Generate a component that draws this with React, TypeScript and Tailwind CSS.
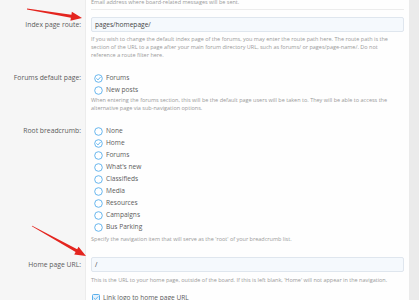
import React from "react";

function Radio({ checked }: { checked?: boolean }) {
  return (
    <svg width="9" height="9" viewBox="0 0 9 9" className="shrink-0">
      <circle cx="4.5" cy="4.5" r="3.8" fill="#fff" stroke="#58afec" strokeWidth="0.9" />
      {checked && (
        <path d="M2.7 4.6 L4 5.9 L6.4 3.2" fill="none" stroke="#58afec" strokeWidth="0.9" strokeLinecap="round" strokeLinejoin="round" />
      )}
    </svg>
  );
}

function Arrow({ x1, y1, x2, y2 }: { x1: number; y1: number; x2: number; y2: number }) {
  const dx = x2 - x1;
  const dy = y2 - y1;
  const len = Math.hypot(dx, dy);
  const ux = dx / len;
  const uy = dy / len;
  const nx = -uy;
  const ny = ux;
  const headLen = 11;
  const headW = 4.5;
  const bx = x2 - ux * headLen;
  const by = y2 - uy * headLen;
  const t0 = 0.4;
  const t1 = 1.6;
  const pts = [
    [x1 + nx * t0, y1 + ny * t0],
    [bx + nx * t1, by + ny * t1],
    [bx + nx * headW, by + ny * headW],
    [x2, y2],
    [bx - nx * headW, by - ny * headW],
    [bx - nx * t1, by - ny * t1],
    [x1 - nx * t0, y1 - ny * t0],
  ]
    .map((p) => p.map((v) => v.toFixed(2)).join(","))
    .join(" ");
  return <polygon points={pts} fill="#e4251f" />;
}

function Desc({ children }: { children: React.ReactNode }) {
  return <div className="text-[5.5px] leading-[8px] text-[#9a9a9a] whitespace-nowrap">{children}</div>;
}

function RadioRow({ label, checked }: { label: string; checked?: boolean }) {
  return (
    <div className="h-[12px] flex items-center gap-[3px] pl-[3px] text-[6.6px] text-[#5c5c5c]">
      <Radio checked={checked} />
      <span>{label}</span>
    </div>
  );
}

function Row({
  label,
  children,
  className = "",
  labelClass = "",
}: {
  label?: string;
  children: React.ReactNode;
  className?: string;
  labelClass?: string;
}) {
  return (
    <div className={"flex " + className}>
      <div className="w-[86px] shrink-0 bg-[#f6f6f6] border-r border-[#ececec] pr-[4px] text-right text-[6.8px] text-[#5c5c5c]">
        <div className={labelClass}>{label}</div>
      </div>
      <div className="flex-1 min-w-0 pl-[5px] pr-[5px]">{children}</div>
    </div>
  );
}

export default function App() {
  const breadcrumbs = [
    ["None", false],
    ["Home", true],
    ["Forums", false],
    ["What's new", false],
    ["Classifieds", false],
    ["Media", false],
    ["Resources", false],
    ["Campaigns", false],
    ["Bus Parking", false],
  ] as const;

  return (
    <div
      className="relative w-[419px] h-[300px] overflow-hidden flex bg-[#fefefe]"
      style={{ fontFamily: '"Open Sans", "Noto Sans", sans-serif' }}
    >
      <div className="w-[409px] flex flex-col">
        <Row className="h-[10px]">
          <div className="-mt-[2px] border-b border-[#ececec] h-[12px]">
            <Desc>Email address where board-related messages will be sent.</Desc>
          </div>
        </Row>
        <Row label="Index page route:" labelClass="pt-[10px] leading-[10px]">
          <div className="pt-[7px]">
            <div className="h-[15px] rounded-[2px] border border-[#dfe6ee] bg-[#f5f9fd] flex items-center pl-[3px] text-[6.6px] text-[#454545]">
              pages/homepage/
            </div>
            <div className="pt-[3px] pb-[13px]">
              <Desc>
                If you wish to change the default index page of the forums, you may enter the route path here. The route path is the
                <br />
                section of the URL to a page after your main forum directory URL, such as forums/ or pages/page-name/. Do not
                <br />
                reference a route filter here.
              </Desc>
            </div>
          </div>
        </Row>
        <Row label="Forums default page:" labelClass="leading-[12px]">
          <RadioRow label="Forums" checked />
          <RadioRow label="New posts" />
          <div className="pb-[13px]">
            <Desc>
              When entering the forums section, this will be the default page users will be taken to. They will be able to access the
              <br />
              alternative page via sub-navigation options.
            </Desc>
          </div>
        </Row>
        <Row label="Root breadcrumb:" labelClass="leading-[12px]">
          {breadcrumbs.map(([l, c]) => (
            <RadioRow key={l} label={l} checked={c} />
          ))}
          <div className="pt-[2px] pb-[14px]">
            <Desc>Specify the navigation item that will serve as the 'root' of your breadcrumb list.</Desc>
          </div>
        </Row>
        <Row label="Home page URL:" labelClass="leading-[15px]">
          <div className="h-[15px] rounded-[2px] border border-[#dfe6ee] bg-[#f5f9fd] flex items-center pl-[3px] text-[6.6px] text-[#454545]">
            /
          </div>
          <div className="pt-[4px] pb-[8px]">
            <Desc>This is the URL to your home page, outside of the board. If this is left blank, 'Home' will not appear in the navigation.</Desc>
          </div>
        </Row>
        <Row className="flex-1">
          <div className="h-[12px] flex items-center gap-[3px] pl-[1px] text-[6.6px] text-[#5c5c5c]">
            <svg width="8" height="8" viewBox="0 0 8 8" className="shrink-0">
              <rect x="0.5" y="0.5" width="7" height="7" rx="1" fill="#e8f2fb" stroke="#58afec" strokeWidth="1" />
              <path d="M2 4.2 L3.4 5.5 L6 2.7" fill="none" stroke="#58afec" strokeWidth="0.9" strokeLinecap="round" strokeLinejoin="round" />
            </svg>
            <span>Link logo to home page URL</span>
          </div>
        </Row>
      </div>
      <div className="w-[10px] bg-[#ebebeb]" />
      <svg className="absolute left-0 top-0 pointer-events-none" width="419" height="300">
        <Arrow x1={27} y1={9} x2={82} y2={18} />
        <Arrow x1={32} y1={226} x2={86} y2={256} />
      </svg>
    </div>
  );
}
